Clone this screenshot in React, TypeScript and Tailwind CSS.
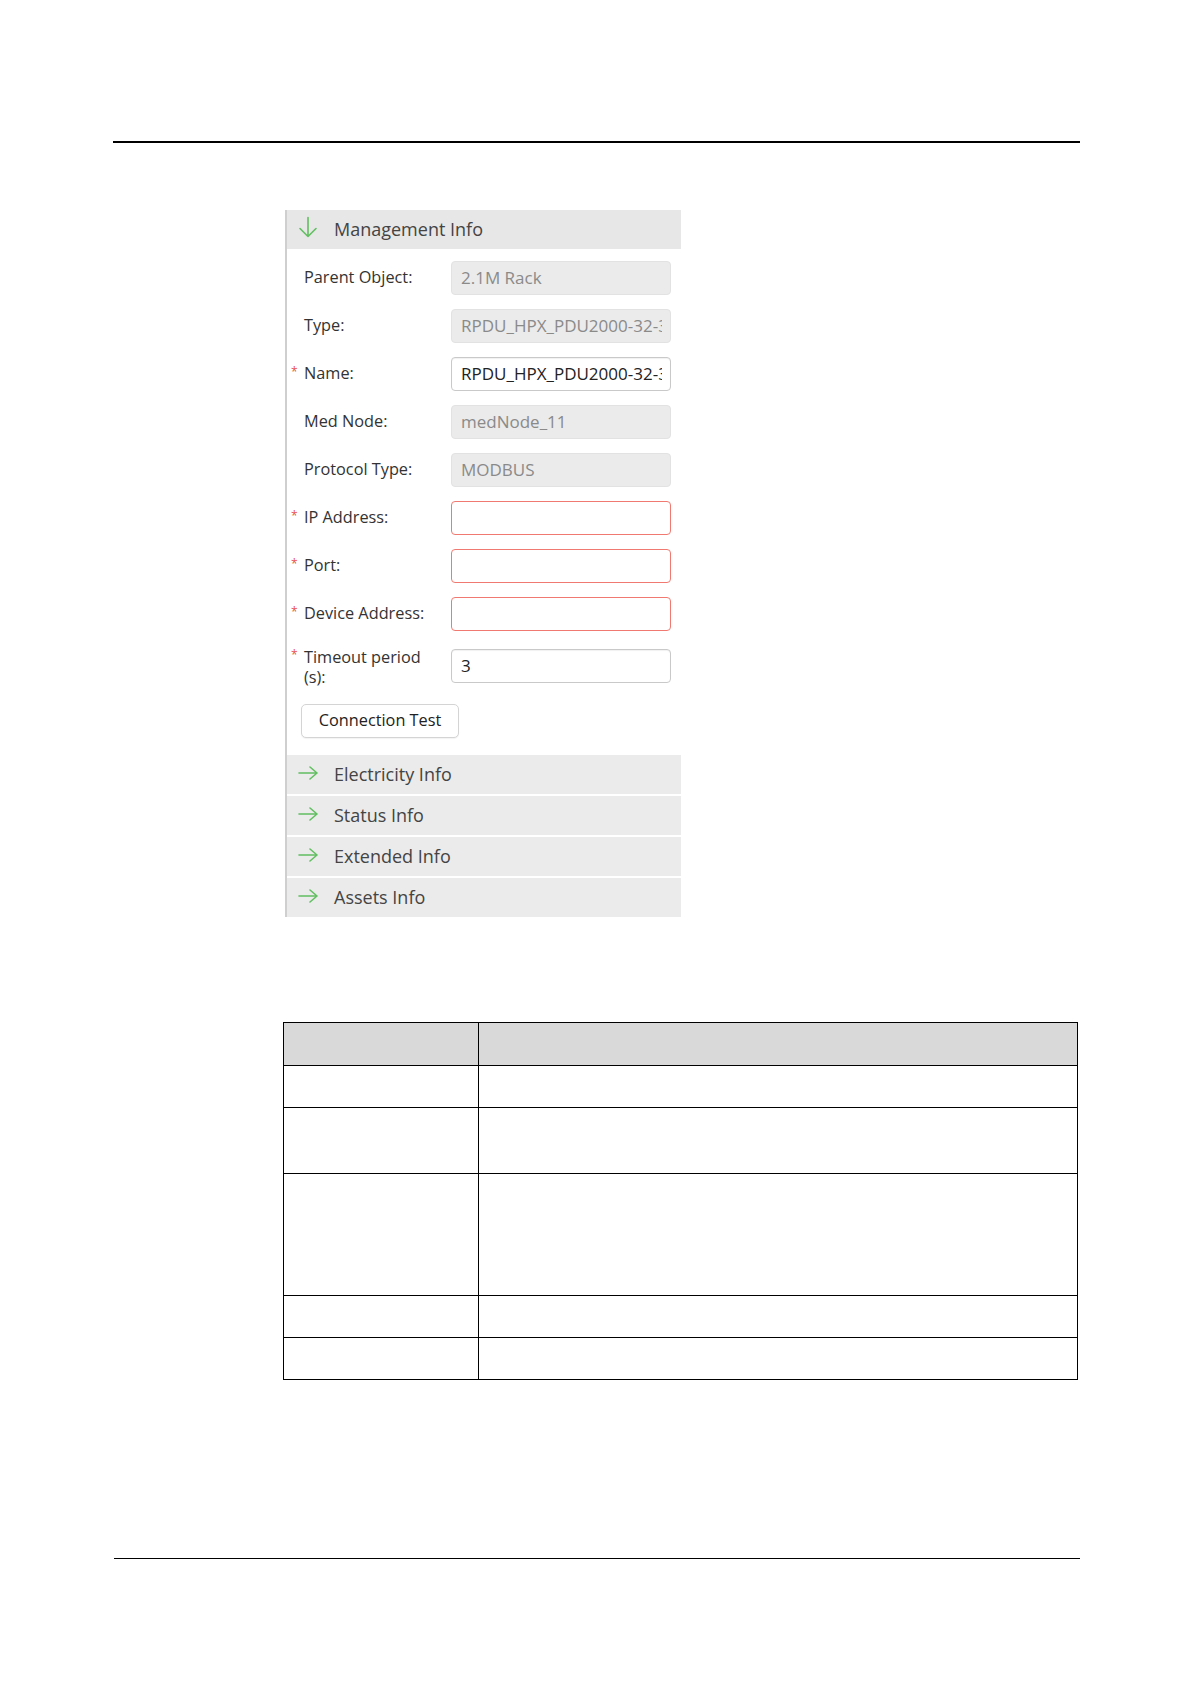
import React from "react";

const green = "#62bf62";

function DownArrow() {
  return (
    <svg width="20" height="22" viewBox="0 0 20 22" fill="none" stroke={green} strokeWidth="1.6" strokeLinecap="round" strokeLinejoin="round">
      <path d="M10 1.5V20.5M2 12.5L10 20.5L18 12.5" />
    </svg>
  );
}

function RightArrow() {
  return (
    <svg width="20" height="14" viewBox="0 0 20 14" fill="none" stroke={green} strokeWidth="1.6" strokeLinecap="round" strokeLinejoin="round">
      <path d="M1 7H19M12 1L19 7L12 13" />
    </svg>
  );
}

type Field = {
  label: string;
  value?: string;
  required?: boolean;
  kind: "disabled" | "normal" | "error";
};

const fields: Field[] = [
  { label: "Parent Object:", value: "2.1M Rack", kind: "disabled" },
  { label: "Type:", value: "RPDU_HPX_PDU2000-32-3", kind: "disabled" },
  { label: "Name:", value: "RPDU_HPX_PDU2000-32-3", kind: "normal", required: true },
  { label: "Med Node:", value: "medNode_11", kind: "disabled" },
  { label: "Protocol Type:", value: "MODBUS", kind: "disabled" },
  { label: "IP Address:", kind: "error", required: true },
  { label: "Port:", kind: "error", required: true },
  { label: "Device Address:", kind: "error", required: true },
];

const inputStyles = {
  disabled: "bg-[#ebebeb] border-[#e2e2e2] text-[#8a8a8a]",
  normal: "bg-white border-[#c9c9c9] text-[#222] shadow-[inset_0_1px_1px_rgba(0,0,0,0.06)]",
  error: "bg-white border-[#f07a72]",
};

function Star({ show }: { show?: boolean }) {
  return (
    <span className="w-[13px] shrink-0 text-[12px] text-[#e8514a] relative -top-[2px]">
      {show ? "*" : ""}
    </span>
  );
}

// long values are cut at the box edge, as in the real form
function Box({ kind, value }: { kind: Field["kind"]; value?: string }) {
  return (
    <div className={`w-[220px] h-[34px] border rounded-[4px] pl-[9px] pr-[8px] flex items-center text-[17px] ${inputStyles[kind]}`}>
      <div className="flex-1 overflow-hidden whitespace-nowrap">{value}</div>
    </div>
  );
}

function Row({ f }: { f: Field }) {
  return (
    <div className="flex items-center h-[34px] mb-[14px]">
      <div className="w-[164px] flex items-center pl-[4px] text-[16.3px] text-[#333]">
        <Star show={f.required} />
        <span>{f.label}</span>
      </div>
      <Box kind={f.kind} value={f.value} />
    </div>
  );
}

function Section({ title }: { title: string }) {
  return (
    <div className="h-[39px] mt-[2px] bg-[#ebebeb] flex items-center pl-[11px]">
      <span className="-mt-[3px]">
        <RightArrow />
      </span>
      <span className="ml-[16px] text-[18px] text-[#444]">{title}</span>
    </div>
  );
}

export default function App() {
  return (
    <div className="w-[1190px] h-[1684px] bg-white flex flex-col font-['Open_Sans','Noto_Sans',sans-serif]">
      <div className="mt-[141px] ml-[113px] w-[967px] h-[1.5px] bg-black" />

      <div className="mt-[67px] ml-[285px] w-[396px] border-l-2 border-[#cfcfcf]">
        <div className="h-[39px] bg-[#e7e7e7] flex items-center pl-[11px]">
          <span className="-mt-[4px]">
            <DownArrow />
          </span>
          <span className="ml-[16px] text-[18px] text-[#444]">Management Info</span>
        </div>

        <div className="bg-white pt-[12px] pb-[17px] flex flex-col items-start">
          {fields.map((f) => (
            <Row key={f.label} f={f} />
          ))}
          <div className="flex items-start mt-[4px]">
            <div className="w-[164px] flex pl-[4px] text-[16.3px] text-[#333] leading-[20px] -mt-[2px]">
              <Star show />
              <span>
                Timeout period
                <br />
                (s):
              </span>
            </div>
            <Box kind="normal" value="3" />
          </div>
          <button className="mt-[17px] ml-[14px] h-[34px] w-[158px] bg-white border border-[#d4d4d4] rounded-[5px] text-[16.3px] text-[#222] shadow-[0_1px_1px_rgba(0,0,0,0.05)]">
            Connection Test
          </button>
        </div>

        <div className="-mt-[2px]">
          <Section title="Electricity Info" />
          <Section title="Status Info" />
          <Section title="Extended Info" />
          <Section title="Assets Info" />
        </div>
      </div>

      <div className="mt-[105px] ml-[283px] w-[795px] border-[1.5px] border-black">
        <div className="flex h-[42px] bg-[#d9d9d9]">
          <div className="w-[195px] border-r-[1.5px] border-black" />
          <div className="flex-1" />
        </div>
        {[42, 66, 122, 42, 42].map((h, i) => (
          <div key={i} className="flex border-t-[1.5px] border-black" style={{ height: h }}>
            <div className="w-[195px] border-r-[1.5px] border-black" />
            <div className="flex-1" />
          </div>
        ))}
      </div>

      <div className="mt-[178px] ml-[114px] w-[966px] h-[1.5px] bg-black" />
    </div>
  );
}
